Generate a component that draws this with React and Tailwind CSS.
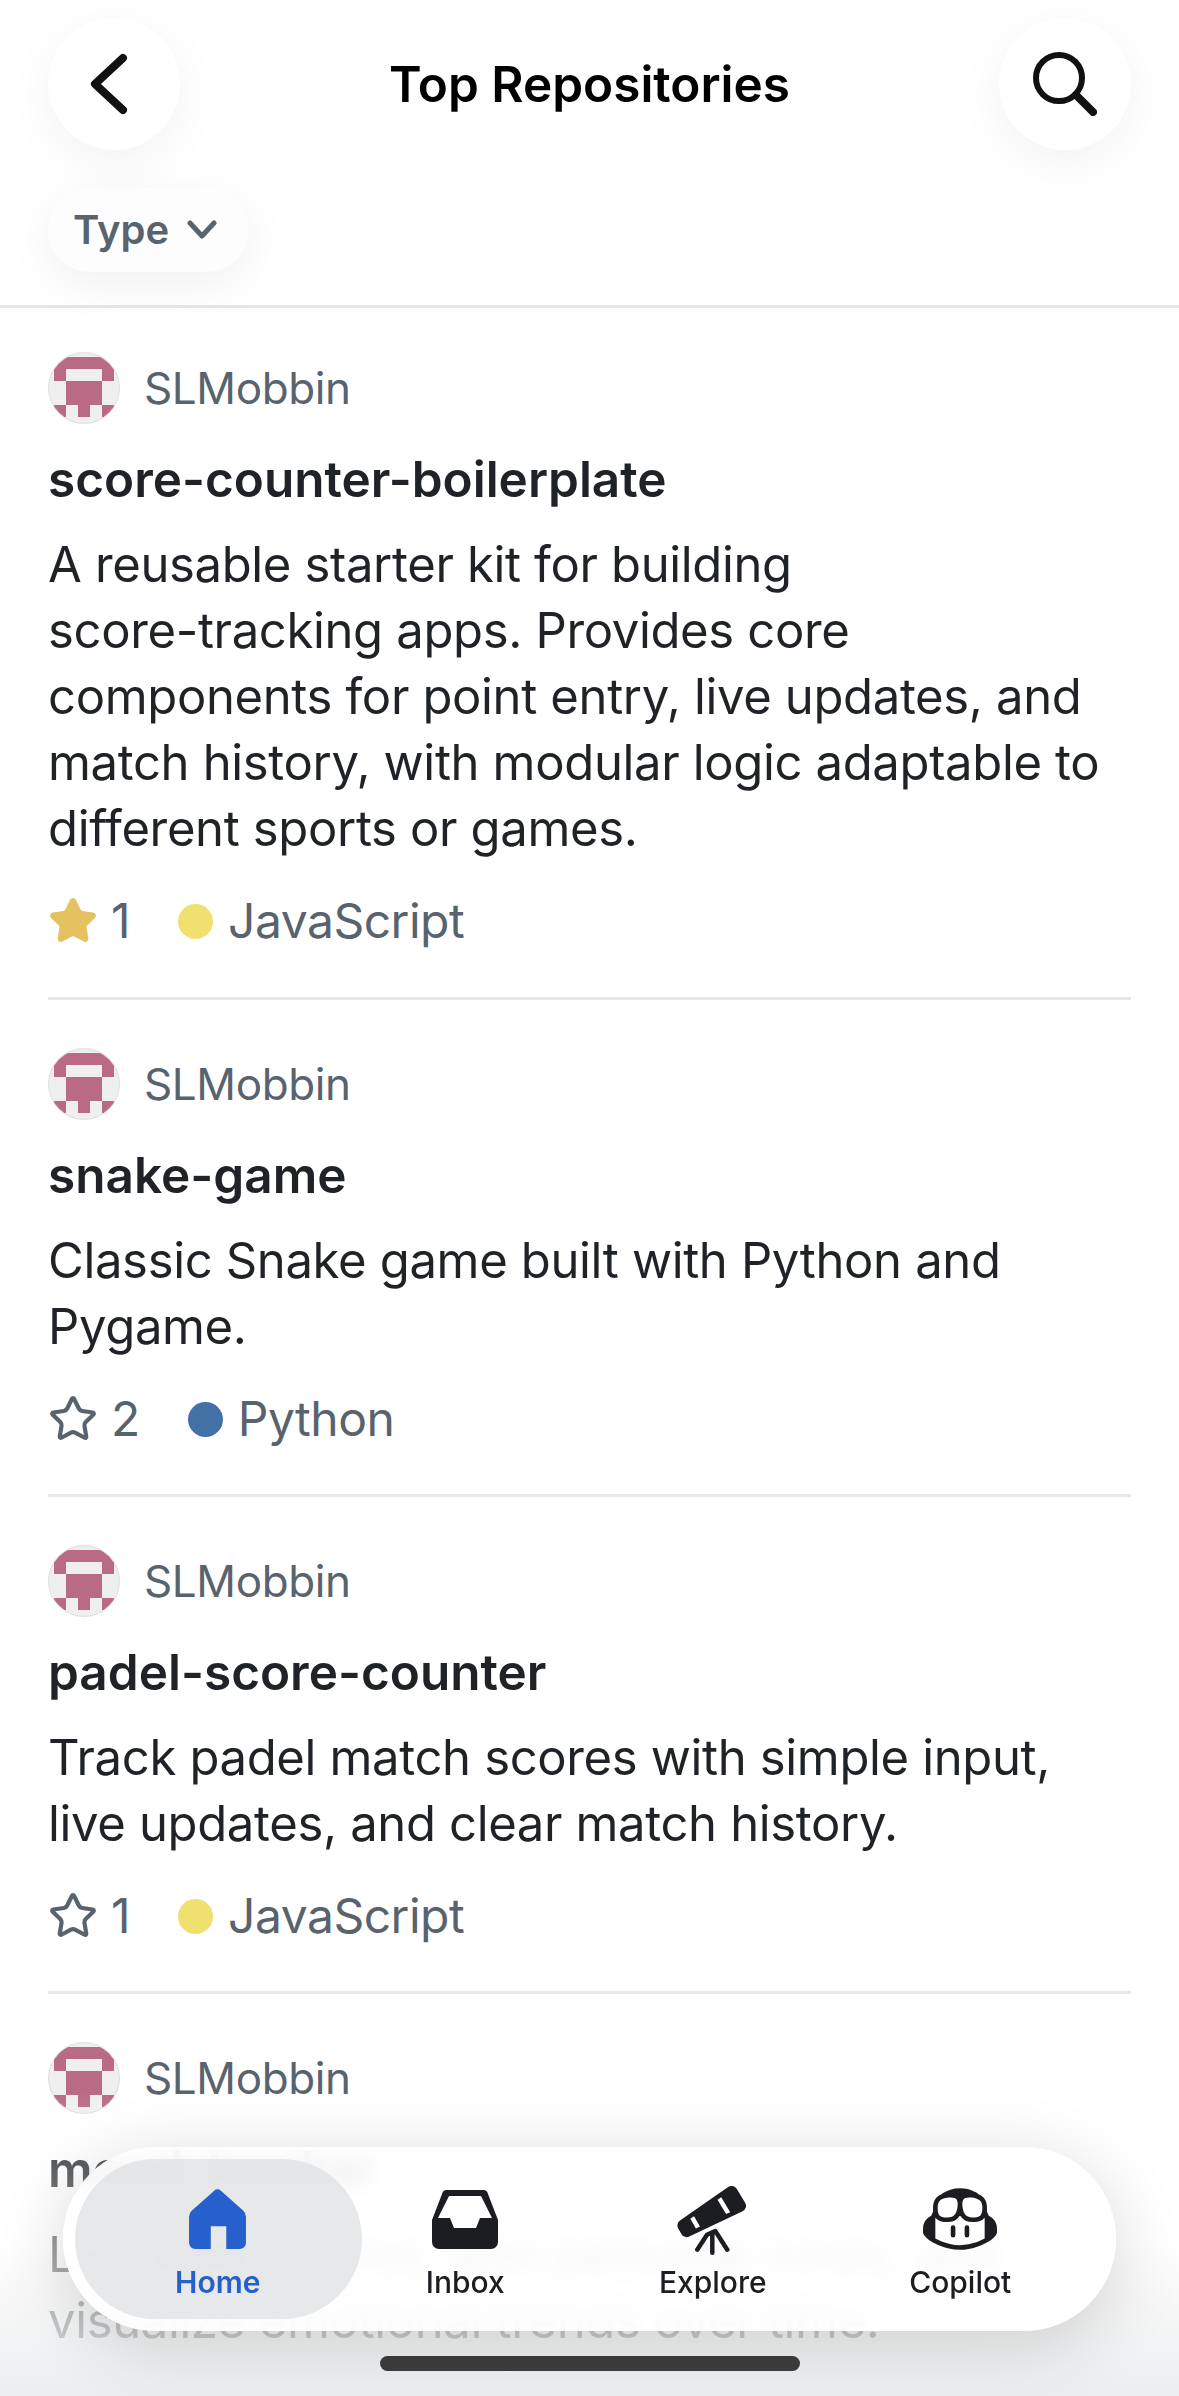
import React from 'react';
import { Star } from 'lucide-react';
import { GoCopilot, GoTelescopeFill } from 'react-icons/go';

const repos = [
  {
    name: 'score-counter-boilerplate',
    description:
      'A reusable starter kit for building\nscore-tracking apps. Provides core\ncomponents for point entry, live updates, and\nmatch history, with modular logic adaptable to\ndifferent sports or games.',
    stars: 1,
    starred: true,
    language: 'JavaScript',
    dot: 'bg-[#efe06f]',
  },
  {
    name: 'snake-game',
    description: 'Classic Snake game built with Python and\nPygame.',
    stars: 2,
    language: 'Python',
    dot: 'bg-[#4471a5]',
  },
  {
    name: 'padel-score-counter',
    description: 'Track padel match scores with simple input,\nlive updates, and clear match history.',
    stars: 1,
    language: 'JavaScript',
    dot: 'bg-[#efe06f]',
  },
  {
    name: 'mood-tracker',
    description: 'Log daily moods, add personal notes, and\nvisualize emotional trends over time.',
    stars: 1,
    starred: true,
    language: 'JavaScript',
    dot: 'bg-[#efe06f]',
  },
];

// identicon cells, 5x5
const cells = ['11111', '10001', '01110', '01110', '10101'];

const Avatar = () => (
  <svg width="72" height="72" viewBox="0 0 72 72" className="shrink-0">
    <defs>
      <clipPath id="avatar-clip">
        <circle cx="36" cy="36" r="35" />
      </clipPath>
    </defs>
    <circle cx="36" cy="36" r="35.5" fill="#f0eff0" stroke="#dedede" />
    <g clipPath="url(#avatar-clip)" fill="#b96a85">
      {cells.map((row, y) =>
        row.split('').map((c, x) =>
          c === '1' ? <rect key={`${x}-${y}`} x={6 + x * 12} y={5 + y * 12} width="12" height="12" /> : null
        )
      )}
    </g>
  </svg>
);

const RepoRow = ({ repo }) => (
  <div className="mx-12 border-b-[3px] border-[#e8e8e9] pt-[48px] pb-[45px] first:pt-[44px] first:pb-[46px]">
    <div className="flex items-center gap-[24px]">
      <Avatar />
      <span className="text-[44px] leading-[60px] tracking-[-0.4px] text-[#59636e]">SLMobbin</span>
    </div>
    <h2 className="mt-[22px] text-[49.5px] leading-[66px] font-semibold text-[#1f2328]">{repo.name}</h2>
    <p className="mt-[20px] text-[49px] leading-[66px] tracking-[-0.35px] whitespace-pre-line text-[#1f2328]">
      {repo.description}
    </p>
    <div className="mt-[29px] flex h-[60px] items-center text-[48px] tracking-[-0.5px] text-[#59636e]">
      {repo.starred ? (
        <Star size={50} strokeWidth={2} className="fill-[#e5c25f] text-[#e5c25f]" />
      ) : (
        <Star size={50} strokeWidth={2} className="text-[#59636e]" />
      )}
      <span className="ml-[13px]">{repo.stars}</span>
      <span className={`ml-[48px] h-[35px] w-[35px] rounded-full ${repo.dot}`} />
      <span className="ml-[15px]">{repo.language}</span>
    </div>
  </div>
);

const HomeIcon = () => (
  <svg width="57" height="60" viewBox="0 0 55 58" fill="#2560cc">
    <path d="M24.5 1.5a4 4 0 0 1 6 0L52.5 21a8 8 0 0 1 2.5 6v25a6 6 0 0 1-6 6H36V36H21v22H6a6 6 0 0 1-6-6V27a8 8 0 0 1 2.5-6z" />
  </svg>
);

const InboxIcon = () => (
  <svg width="66" height="59" viewBox="0 0 66 59" fill="#1b1d20">
    <path
      fillRule="evenodd"
      d="M15 0H51a5 5 0 0 1 5 4L66 30V52a7 7 0 0 1-7 7H7a7 7 0 0 1-7-7V30L10 4a5 5 0 0 1 5-4zM17 6H49L60 28H48L44 38H22L18 28H6z"
    />
  </svg>
);

const tabs = [
  { label: 'Home', icon: <HomeIcon />, active: true },
  { label: 'Inbox', icon: <InboxIcon /> },
  { label: 'Explore', icon: <GoTelescopeFill size={72} color="#1b1d20" /> },
  { label: 'Copilot', icon: <GoCopilot size={74} color="#1b1d20" /> },
];

const TabBar = () => (
  <div className="absolute top-[2147px] left-[63px] grid h-[184px] w-[1053px] grid-cols-4 rounded-full bg-white/[0.88] pr-[32px] pl-[31px] shadow-[0_14px_70px_rgba(0,0,0,0.16)] backdrop-blur-[10px]">
    {tabs.map((tab) => (
      <div key={tab.label} className="relative flex flex-col items-center">
        {tab.active && (
          <div className="absolute top-[12px] left-[-19px] h-[160px] w-[287px] rounded-full bg-[#dcdee0]/70" />
        )}
        <div className="relative mt-[36px] flex h-[72px] items-center justify-center">{tab.icon}</div>
        <span
          className={`relative mt-[7px] text-[30px] leading-[40px] ${
            tab.active ? 'font-semibold text-[#2560cc]' : 'font-medium text-[#1b1d20]'
          }`}
        >
          {tab.label}
        </span>
      </div>
    ))}
  </div>
);

export default function App() {
  return (
    <div className="relative h-[2396px] w-[1179px] overflow-hidden bg-white font-['Inter',sans-serif]">
      {/* Header */}
      <header className="h-[308px] border-b-[3px] border-[#e6e6e7] px-12 pt-[18px]">
        <div className="flex items-center justify-between">
          <button className="flex h-[132px] w-[132px] items-center justify-center rounded-full bg-white shadow-[0_12px_50px_rgba(0,0,0,0.05)]">
            <svg width="64" height="64" viewBox="0 0 64 64" fill="none" stroke="#111" strokeWidth="8" strokeLinecap="round" strokeLinejoin="round">
              <path d="M41 6 13 32l28 26" />
            </svg>
          </button>
          <h1 className="text-[49.5px] font-semibold text-black">Top Repositories</h1>
          <button className="flex h-[132px] w-[132px] items-center justify-center rounded-full bg-white shadow-[0_12px_50px_rgba(0,0,0,0.05)]">
            <svg width="64" height="64" viewBox="0 0 64 64" fill="none" stroke="#111" strokeLinecap="round">
              <circle cx="26" cy="26" r="23" strokeWidth="6" />
              <path d="M43 43 60 60" strokeWidth="8" />
            </svg>
          </button>
        </div>
        <button className="mt-[38px] flex h-[84px] w-[201px] items-center rounded-full bg-[#fdfdfd] pl-[25px] shadow-[0_12px_50px_rgba(0,0,0,0.06)]">
          <span className="text-[40px] font-semibold text-[#59636e]">Type</span>
          <svg width="30" height="20" viewBox="0 0 30 20" fill="none" stroke="#59636e" strokeWidth="5" strokeLinecap="round" strokeLinejoin="round" className="ml-[18px]">
            <path d="M3 3l12 13L27 3" />
          </svg>
        </button>
      </header>

      {/* Repo list */}
      <div>
        {repos.map((repo) => (
          <RepoRow key={repo.name} repo={repo} />
        ))}
      </div>

      {/* Fade behind the tab bar */}
      <div className="absolute inset-x-0 top-[2090px] bottom-0 bg-[linear-gradient(to_bottom,rgba(255,255,255,0)_0%,rgba(255,255,255,0.55)_50%,rgba(240,241,242,0.8)_80%,rgba(236,238,240,1)_100%)]" />

      <TabBar />

      {/* Home indicator */}
      <div className="absolute top-[2356px] left-[380px] h-[15px] w-[420px] rounded-full bg-[#3a3a3b]" />
    </div>
  );
}
